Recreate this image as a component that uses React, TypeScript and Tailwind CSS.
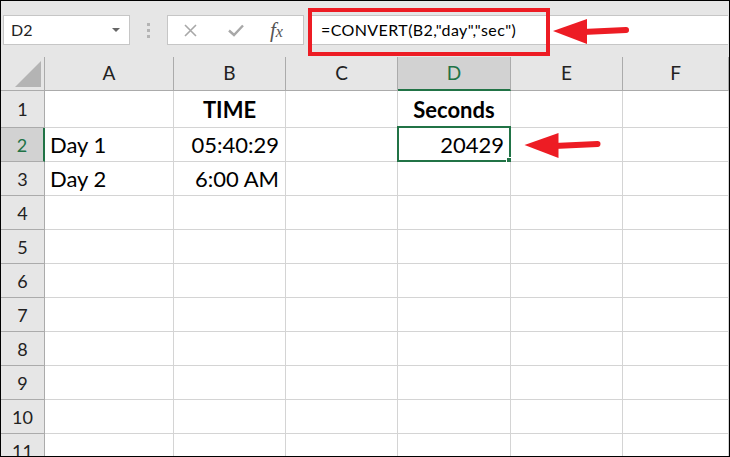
import React from "react";

const cols = [
  { key: "A", w: "w-[129px]" },
  { key: "B", w: "w-[112px]" },
  { key: "C", w: "w-[112px]" },
  { key: "D", w: "w-[113px]" },
  { key: "E", w: "w-[112px]" },
  { key: "F", w: "w-[106px]" },
];

type Cell = { text: string; align?: "left" | "right" | "center"; bold?: boolean };

const data: Record<number, Record<string, Cell>> = {
  1: {
    B: { text: "TIME", align: "center", bold: true },
    D: { text: "Seconds", align: "center", bold: true },
  },
  2: {
    A: { text: "Day 1", align: "left" },
    B: { text: "05:40:29", align: "right" },
    D: { text: "20429", align: "right" },
  },
  3: {
    A: { text: "Day 2", align: "left" },
    B: { text: "6:00 AM", align: "right" },
  },
};

const rows = [
  { n: 1, h: "h-[37px]" },
  { n: 2, h: "h-[34px]" },
  { n: 3, h: "h-[34px]" },
  { n: 4, h: "h-[34px]" },
  { n: 5, h: "h-[34px]" },
  { n: 6, h: "h-[34px]" },
  { n: 7, h: "h-[34px]" },
  { n: 8, h: "h-[34px]" },
  { n: 9, h: "h-[34px]" },
  { n: 10, h: "h-[34px]" },
  { n: 11, h: "h-[34px]" },
];

const font = { fontFamily: "Lato, 'Open Sans', sans-serif" };

const RedArrow: React.FC<{ className: string }> = ({ className }) => (
  <svg className={className} viewBox="0 0 76 28" fill="none">
    <polygon points="0,13 34,1 34,26" fill="#ed1c24" />
    <line x1="30" y1="14" x2="73" y2="12" stroke="#ed1c24" strokeWidth="6" strokeLinecap="round" />
  </svg>
);

export default function App() {
  return (
    <div
      className="relative w-[730px] h-[457px] border border-black bg-[#e6e6e6] overflow-hidden"
      style={font}
    >
      {/* formula bar area */}
      <div className="flex items-start h-[56px] pt-[14px]">
        <div className="ml-[2px] w-[127px] h-[30px] bg-white border border-[#c6c6c6] flex items-center justify-between pl-[7px] pr-[9px]">
          <span className="text-[16px] text-[#222]">D2</span>
          <span className="w-0 h-0 border-l-[4px] border-r-[4px] border-t-[4px] border-l-transparent border-r-transparent border-t-[#666]" />
        </div>
        <div className="w-[37px] h-[30px] flex flex-col items-center justify-center gap-[3px]">
          <span className="w-[3px] h-[3px] bg-[#b4b4b4]" />
          <span className="w-[3px] h-[3px] bg-[#b4b4b4]" />
          <span className="w-[3px] h-[3px] bg-[#b4b4b4]" />
        </div>
        <div className="w-[137px] h-[30px] bg-white border border-[#c6c6c6] flex items-center">
          <svg className="ml-[16px] w-[13px] h-[13px]" viewBox="0 0 13 13">
            <path d="M1 1 L12 12 M12 1 L1 12" stroke="#a8a8a8" strokeWidth="1.6" />
          </svg>
          <svg className="ml-[31px] w-[16px] h-[13px]" viewBox="0 0 16 13">
            <path d="M1 6.5 L6 11 L15 1.5" stroke="#a8a8a8" strokeWidth="2.4" fill="none" />
          </svg>
          <span
            className="ml-[26px] text-[21px] italic text-[#555] leading-none"
            style={{ fontFamily: "'Liberation Serif', serif" }}
          >
            f<span className="text-[16px]">x</span>
          </span>
        </div>
        <div className="ml-[4px] mr-[1px] flex-1 h-[30px] bg-white border-y border-[#c6c6c6] flex items-center pl-[13px]">
          <span className="text-[16px] tracking-[0.4px] text-black">=CONVERT(B2,"day","sec")</span>
        </div>
      </div>

      {/* grid */}
      <div className="flex flex-col">
        <div className="flex h-[34px]">
          <div className="w-[44px] border-r border-b border-[#ababab] bg-[#e6e6e6] flex items-end justify-end pr-[3px] pb-[3px]">
            <svg className="w-[26px] h-[26px]" viewBox="0 0 26 26">
              <polygon points="26,0 26,26 0,26" fill="#b4b4b4" />
            </svg>
          </div>
          {cols.map((c) => {
            const sel = c.key === "D";
            return (
              <div
                key={c.key}
                className={`${c.w} border-r flex items-center justify-center text-[19px] ${
                  sel
                    ? "bg-[#d2d2d2] text-[#217346] border-b-2 border-r-[#ababab] border-b-[#217346]"
                    : "bg-[#e6e6e6] text-[#222] border-b border-[#ababab]"
                }`}
              >
                {c.key}
              </div>
            );
          })}
        </div>
        {rows.map((r) => {
          const selRow = r.n === 2;
          return (
            <div key={r.n} className={`flex ${r.h}`}>
              <div
                className={`w-[44px] border-b flex items-center justify-center text-[18px] pt-[1px] ${
                  selRow
                    ? "bg-[#d2d2d2] text-[#217346] border-r-2 border-r-[#217346] border-b-[#ababab]"
                    : "bg-[#e6e6e6] text-[#222] border-r border-[#ababab]"
                }`}
              >
                {r.n}
              </div>
              {cols.map((c) => {
                const cell = data[r.n]?.[c.key];
                const sel = r.n === 2 && c.key === "D";
                const align =
                  cell?.align === "left"
                    ? "justify-start pl-[5px]"
                    : cell?.align === "center"
                    ? "justify-center"
                    : "justify-end pr-[6px]";
                return (
                  <div
                    key={c.key}
                    className={`relative ${c.w} border-r border-b border-[#d4d4d4] bg-white flex items-center ${align} text-[22px] text-black ${
                      cell?.bold ? "font-bold" : ""
                    }`}
                  >
                    {cell?.text}
                    {sel && (
                      <>
                        <div className="absolute -left-[1px] -top-[2px] right-[-1px] bottom-[-1px] border-2 border-[#217346]" />
                        <div className="absolute right-[-3px] bottom-[-3px] w-[5px] h-[5px] bg-[#217346] border border-white box-content" />
                      </>
                    )}
                  </div>
                );
              })}
            </div>
          );
        })}
      </div>

      {/* annotations */}
      <div className="absolute left-[307px] top-[7px] w-[242px] h-[48px] border-[4px] border-[#ed1c24]" />
      <RedArrow className="absolute left-[552px] top-[17px] w-[76px] h-[28px]" />
      <RedArrow className="absolute left-[520px] top-[131px] w-[83px] h-[28px]" />
    </div>
  );
}
